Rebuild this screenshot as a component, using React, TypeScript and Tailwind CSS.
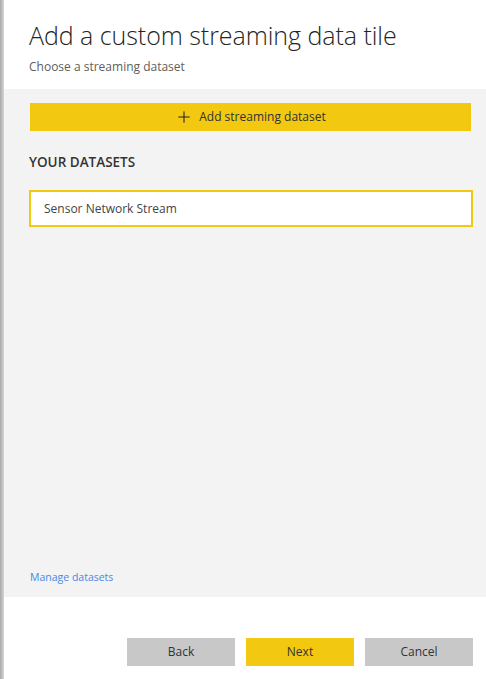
import { Plus } from "lucide-react";

const footerButtons = [
  { label: "Back", primary: false },
  { label: "Next", primary: true },
  { label: "Cancel", primary: false },
];

export default function App() {
  return (
    <div
      className="flex h-[679px] w-[486px] bg-white text-[#333]"
      style={{ fontFamily: '"Open Sans", "Noto Sans", sans-serif' }}
    >
      {/* left shadow edge */}
      <div className="w-[4px] shrink-0 bg-gradient-to-r from-[#a9a9a9] to-[#d6d6d6]" />

      <div className="flex flex-1 flex-col">
        {/* Header */}
        <div className="h-[89px] shrink-0 pl-[25px] pt-[19px]">
          <h1 className="text-[25px] font-light leading-[32px] tracking-[-0.05px] text-[#252525]">
            Add a custom streaming data tile
          </h1>
          <p className="mt-[8px] text-[12px] leading-[16px] text-[#605e5c]">
            Choose a streaming dataset
          </p>
        </div>

        {/* Body */}
        <div className="flex flex-1 flex-col bg-[#f3f3f3] pl-[26px] pr-[13px] pt-[14px] pb-[13px]">
          <button className="flex h-[28px] w-[441px] items-center justify-center gap-[6px] bg-[#f2c811] text-[12px] text-[#333]">
            <Plus className="h-[18px] w-[18px] text-[#222]" strokeWidth={1.4} />
            <span>Add streaming dataset</span>
          </button>

          <div className="-ml-[1px] mt-[22px] text-[13.5px] font-semibold uppercase leading-[18px] text-[#333]">
            Your datasets
          </div>

          <div className="-ml-[1px] mt-[19px] flex h-[37px] w-[444px] items-center border-2 border-[#f2c811] bg-white pl-[13px] text-[12px] text-[#444]">
            Sensor Network Stream
          </div>

          <div className="flex-1" />

          <a className="text-[10.5px] leading-[14px] text-[#4a86e8]" href="#">
            Manage datasets
          </a>
        </div>

        {/* Footer */}
        <div className="flex h-[82px] shrink-0 items-start justify-end gap-[11px] pr-[13px] pt-[41px]">
          {footerButtons.map((b) => (
            <button
              key={b.label}
              className={`h-[28px] w-[108px] text-[12px] text-[#333] ${
                b.primary ? "bg-[#f2c811]" : "bg-[#c8c8c8]"
              }`}
            >
              {b.label}
            </button>
          ))}
        </div>
      </div>
    </div>
  );
}
